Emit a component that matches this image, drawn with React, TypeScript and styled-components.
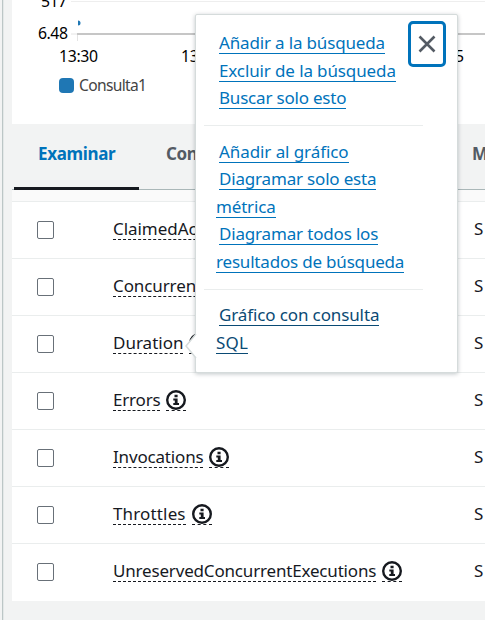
import React from "react";
import styled, { createGlobalStyle } from "styled-components";

const GlobalStyle = createGlobalStyle`
  * { box-sizing: border-box; }
  body {
    margin: 0;
    overflow: hidden;
    background: #f2f3f3;
    font-family: "Noto Sans", "Open Sans", sans-serif;
    font-size: 17px;
    color: #16191f;
  }
`;

const Page = styled.div`
  position: relative;
  width: 485px;
  height: 620px;
  display: flex;
  overflow: hidden;
`;

const Gutter = styled.div`
  flex: none;
  width: 12px;
  border-left: 2px solid #f2f3f3;
  background: linear-gradient(to right, #bcc6c6 0 1px, #e4e8e8 1px 2px, #f2f3f3 2px);
`;

const Main = styled.main`
  flex: 1;
  min-width: 0;
`;

const Chart = styled.svg`
  display: block;
  background: #fff;
  text { font-family: "Noto Sans", sans-serif; }
`;

const Tabs = styled.nav`
  display: flex;
  height: 66px;
  border-bottom: 1px solid #aab7b8;
  font-weight: 700;
  line-height: 60px;
  letter-spacing: -0.35px;
  white-space: nowrap;
`;

const Tab = styled.div<{ $active?: boolean }>`
  position: relative;
  flex: none;
  width: ${(p) => (p.$active ? 127 : 306)}px;
  padding-left: 26px;
  color: ${(p) => (p.$active ? "#0073bb" : "#545b64")};
  &::after {
    content: "";
    display: ${(p) => (p.$active ? "block" : "none")};
    position: absolute;
    left: 2px;
    right: 0;
    bottom: -1px;
    height: 3px;
    background: #16191f;
  }
`;

const TabDivider = styled.i`
  width: 1px;
  height: 37px;
  margin: 12px 0 0 1px;
  background: #aab7b8;
`;

const TableHead = styled.div`
  height: 12px;
  background: #fafafa;
  border-bottom: 1px solid #eaeded;
`;

const Row = styled.div`
  display: flex;
  align-items: flex-start;
  height: 57px;
  padding-left: 25px;
  background: #fff;
  border-bottom: 1px solid #eaeded;
  &:last-child { border-bottom-color: #fff; }
`;

const Checkbox = styled.span`
  width: 17px;
  height: 18px;
  margin: 19px 59px 0 0;
  border: 1px solid #687078;
  border-radius: 2px;
`;

const Name = styled.span<{ $spacing: number }>`
  height: 24px;
  margin-top: 14px;
  line-height: 25px;
  letter-spacing: ${(p) => p.$spacing}px;
  border-bottom: 1px dashed #16191f;
`;

const InfoBox = styled.span`
  height: 21px;
  width: 20px;
  margin: 17px 0 0 6px;
  border-bottom: 1px dashed #16191f;
  svg { display: block; }
`;

const Stat = styled.span`
  width: 11px;
  margin: 14px 0 0 auto;
  line-height: 25px;
`;

const Popover = styled.section`
  position: absolute;
  left: 195px;
  top: 14px;
  width: 263px;
  height: 359px;
  padding: 15px 8px 0;
  background: #fff;
  border: 1px solid #d5dbdb;
  border-radius: 2px;
  box-shadow: 0 1px 4px rgba(0, 28, 36, 0.25);
`;

const Arrow = styled.svg`
  position: absolute;
  left: -12px;
  top: 317px;
`;

const Group = styled.div<{ $height: number; $top: number }>`
  width: 219px;
  height: ${(p) => p.$height}px;
  padding: ${(p) => p.$top}px 0 0 12px;
  border-bottom: 1px solid #eaeded;
  &:last-of-type { border-bottom: 0; }
`;

const Line = styled.div`
  height: 27.4px;
  display: flex;
  white-space: nowrap;
`;

const Link = styled.a<{ $spacing: number; $indent?: boolean; $dark?: boolean }>`
  height: 24px;
  margin-left: ${(p) => (p.$indent ? 3 : 0)}px;
  line-height: 25px;
  letter-spacing: ${(p) => p.$spacing}px;
  color: ${(p) => (p.$dark ? "#0a4a74" : "#0073bb")};
  border-bottom: 1px solid currentColor;
`;

const Close = styled.button`
  position: absolute;
  left: 212px;
  top: 6px;
  width: 38px;
  height: 46px;
  padding: 0;
  background: #fff;
  border: 3px solid #0073bb;
  border-radius: 5px;
  svg { display: block; margin: 0 auto; }
`;

const InfoIcon = () => (
  <InfoBox>
    <svg width="20" height="20" viewBox="0 0 20 20">
      <circle cx="10" cy="10" r="8.8" fill="none" stroke="#16191f" strokeWidth="2.4" />
      <path d="M8.5 4.7h3.1v2.6H8.5zM7.3 8.5h4.3v4.6H13v2H7.3v-2h1.5v-2.6H7.3z" fill="#16191f" />
    </svg>
  </InfoBox>
);

const metrics: [string, number][] = [
  ["ClaimedAccountConcurrency", -0.05],
  ["ConcurrentExecutions", -0.1],
  ["Duration", 0],
  ["Errors", -0.2],
  ["Invocations", -0.17],
  ["Throttles", 0.15],
  ["UnreservedConcurrentExecutions", -0.18],
];

type Item = { text: string; spacing: number; indent?: boolean; dark?: boolean };
const groups: { height: number; top: number; items: Item[] }[] = [
  {
    height: 96,
    top: 0.2,
    items: [
      { text: "Añadir a la búsqueda", spacing: -0.16, indent: true },
      { text: "Excluir de la búsqueda", spacing: -0.12, indent: true },
      { text: "Buscar solo esto", spacing: -0.2, indent: true },
    ],
  },
  {
    height: 164,
    top: 13,
    items: [
      { text: "Añadir al gráfico", spacing: -0.08, indent: true },
      { text: "Diagramar solo esta", spacing: -0.18, indent: true },
      { text: "métrica", spacing: -0.17 },
      { text: "Diagramar todos los", spacing: -0.17, indent: true },
      { text: "resultados de búsqueda", spacing: -0.19 },
    ],
  },
  {
    height: 80,
    top: 12.4,
    items: [
      { text: "Gráfico con consulta", spacing: -0.12, indent: true, dark: true },
      { text: "SQL", spacing: 0.2, dark: true },
    ],
  },
];

export default function App() {
  return (
    <>
      <GlobalStyle />
      <Page>
        <Gutter />
        <Main>
          <Chart width="473" height="124" viewBox="12 0 473 124">
            <path d="M71 1.5H485" stroke="#eee" />
            <path d="M71 34H77M77.5 35V41" stroke="#e4e4e4" />
            <path d="M77 34H485" stroke="#c6c6c6" strokeWidth="2" />
            <path d="M78 20.5a2.5 2.5 0 0 1 0 5z" fill="#1f77b4" />
            <g fontSize="15.8" fill="#000">
              <text x="41" y="6.5" textLength="26">517</text>
              <text x="38" y="39" textLength="30">6.48</text>
              <text x="59" y="62" textLength="39">13:30</text>
              <text x="181" y="62" textLength="39">13:45</text>
              <text x="425" y="62" textLength="39">14:15</text>
            </g>
            <rect x="59" y="78" width="15" height="15" rx="4" fill="#1f77b4" />
            <text x="79" y="91" fontSize="15.6" fill="#444" textLength="68">Consulta1</text>
          </Chart>
          <Tabs>
            <Tab $active>Examinar</Tab>
            <TabDivider />
            <Tab>Consulta</Tab>
            <Tab>Métricas</Tab>
          </Tabs>
          <TableHead />
          <div>
            {metrics.map(([name, spacing]) => (
              <Row key={name}>
                <Checkbox />
                <Name $spacing={spacing}>{name}</Name>
                <InfoIcon />
                <Stat>S</Stat>
              </Row>
            ))}
          </div>
        </Main>
        <Popover>
          <Arrow width="13" height="28" viewBox="0 0 13 28">
            <path d="M13 1L2 14L13 27z" fill="#fff" />
            <path d="M12 2L2 14L12 26" fill="none" stroke="#d5dbdb" strokeWidth="1.5" />
          </Arrow>
          {groups.map((group) => (
            <Group key={group.height} $height={group.height} $top={group.top}>
              {group.items.map((item) => (
                <Line key={item.text}>
                  <Link $spacing={item.spacing} $indent={item.indent} $dark={item.dark}>
                    {item.text}
                  </Link>
                </Line>
              ))}
            </Group>
          ))}
          <Close aria-label="Cerrar">
            <svg width="20" height="20" viewBox="0 0 20 20">
              <path d="M2.5 2.5L17.5 17.5M17.5 2.5L2.5 17.5" stroke="#545b64" strokeWidth="2.6" />
            </svg>
          </Close>
        </Popover>
      </Page>
    </>
  );
}
